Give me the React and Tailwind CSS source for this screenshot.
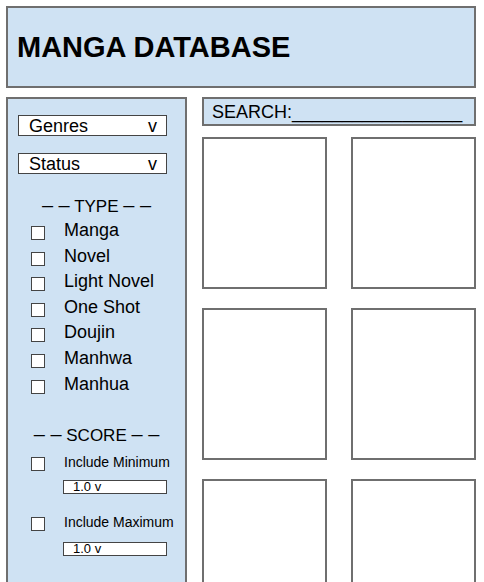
const types = ["Manga", "Novel", "Light Novel", "One Shot", "Doujin", "Manhwa", "Manhua"];

function Heading({ label, className }) {
  return (
    <div className={"h-[21px] whitespace-nowrap text-center text-[17px] leading-[21px] " + className}>
      <span className="text-[20px]">– –</span> {label} <span className="text-[20px]">– –</span>
    </div>
  );
}

function Checkbox({ className }) {
  return <div className={"h-[14px] w-[14px] shrink-0 border border-[#444] bg-white " + className}></div>;
}

function Dropdown({ label }) {
  return (
    <div className="ml-[10px] flex h-[21px] w-[149px] items-center justify-between border border-[#444] bg-white pl-[10px] pr-[9px] pt-[1px] text-[18px] leading-[19px]">
      <span>{label}</span>
      <span>v</span>
    </div>
  );
}

function ScoreOption({ label, boxClass }) {
  return (
    <>
      <div className="flex h-[20px] items-start">
        <Checkbox className="ml-[23px] mt-[5px]" />
        <span className="ml-[19px] text-[14px] leading-[20px]">{label}</span>
      </div>
      <div className={"ml-[55px] h-[14px] w-[104px] border border-[#444] bg-white pl-[9px] text-[13px] leading-[12px] " + boxClass}>
        1.0 v
      </div>
    </>
  );
}

export default function App() {
  return (
    <div className="h-[582px] w-[484px] overflow-hidden bg-white pl-[6px] pt-[6px] font-['Liberation_Sans',Arial,sans-serif] text-black">
      {/* Header */}
      <div className="flex h-[82px] w-[470px] items-center border-2 border-[#6f6f6f] bg-[#cfe2f3] pl-[9px] pt-[2px]">
        <h1 className="text-[29px] font-bold">MANGA DATABASE</h1>
      </div>

      <div className="mt-[9px] flex gap-[15px]">
        {/* Sidebar filters */}
        <div className="h-[600px] w-[181px] shrink-0 border-2 border-[#6f6f6f] bg-[#cfe2f3] pt-[16px]">
          <Dropdown label="Genres" />
          <div className="h-[17px]"></div>
          <Dropdown label="Status" />

          <Heading label="TYPE" className="mt-[21px]" />
          {types.map((t) => (
            <div key={t} className="flex h-[25.6px] items-start">
              <Checkbox className="ml-[23px] mt-[10px]" />
              <span className="ml-[19px] pt-[2px] text-[18px] leading-[25.6px]">{t}</span>
            </div>
          ))}

          <Heading label="SCORE" className="mt-[29px]" />
          <div className="h-[7px]"></div>
          <ScoreOption label="Include Minimum" boxClass="mt-[8px]" />
          <div className="h-[18px]"></div>
          <ScoreOption label="Include Maximum" boxClass="mt-[10px]" />
        </div>

        {/* Search + results */}
        <div className="w-[274px]">
          <div className="h-[29px] overflow-visible whitespace-nowrap border-2 border-[#6f6f6f] bg-[#cfe2f3] pl-[8px] text-[18px] leading-[27px]">
            SEARCH:_________________
          </div>
          <div className="mt-[11px] grid grid-cols-[125px_125px] gap-x-[24px] gap-y-[19px]">
            {[0, 1, 2, 3, 4, 5].map((i) => (
              <div key={i} className="h-[152px] border-2 border-[#6f6f6f] bg-white"></div>
            ))}
          </div>
        </div>
      </div>
    </div>
  );
}
